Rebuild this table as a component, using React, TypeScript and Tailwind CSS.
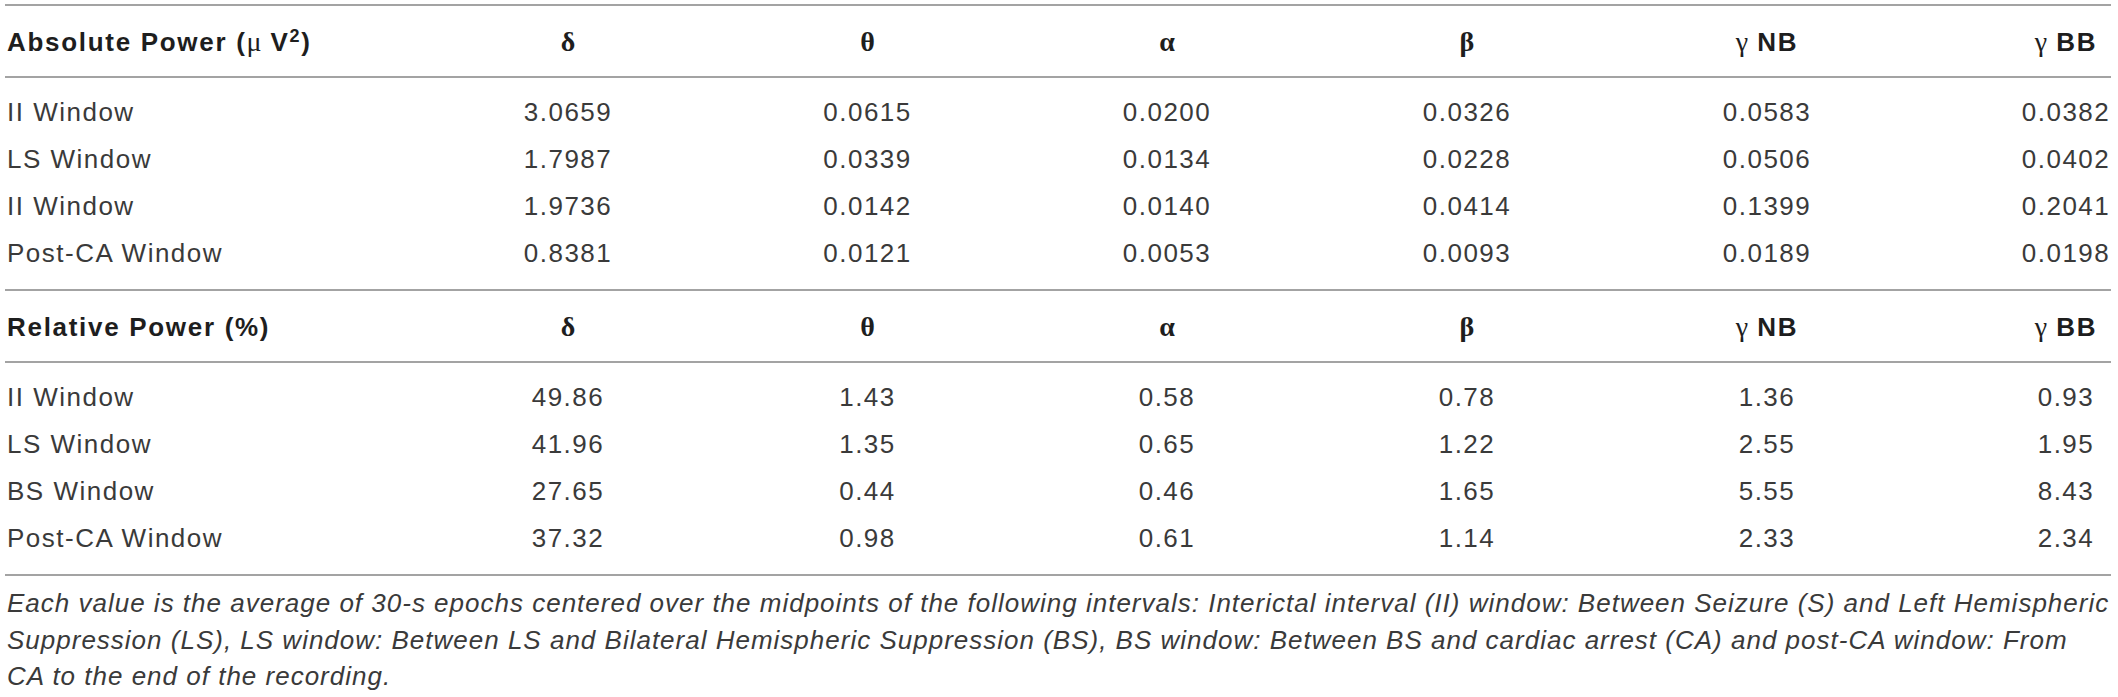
import type { ReactNode } from "react";

type Row = { label: string; values: string[] };

const absoluteRows: Row[] = [
  { label: "II Window", values: ["3.0659", "0.0615", "0.0200", "0.0326", "0.0583", "0.0382"] },
  { label: "LS Window", values: ["1.7987", "0.0339", "0.0134", "0.0228", "0.0506", "0.0402"] },
  { label: "II Window", values: ["1.9736", "0.0142", "0.0140", "0.0414", "0.1399", "0.2041"] },
  { label: "Post-CA Window", values: ["0.8381", "0.0121", "0.0053", "0.0093", "0.0189", "0.0198"] },
];

const relativeRows: Row[] = [
  { label: "II Window", values: ["49.86", "1.43", "0.58", "0.78", "1.36", "0.93"] },
  { label: "LS Window", values: ["41.96", "1.35", "0.65", "1.22", "2.55", "1.95"] },
  { label: "BS Window", values: ["27.65", "0.44", "0.46", "1.65", "5.55", "8.43"] },
  { label: "Post-CA Window", values: ["37.32", "0.98", "0.61", "1.14", "2.33", "2.34"] },
];

// grid shared by header and body rows
const grid = "grid grid-cols-[413px_300px_299px_300px_300px_300px_1fr] items-center";

const Greek = ({ children, light }: { children: ReactNode; light?: boolean }) => (
  <span
    className={`font-['Liberation_Serif',serif] text-[28px] tracking-normal ${
      light ? "font-normal" : "font-bold"
    }`}
  >
    {children}
  </span>
);

const bands: ReactNode[] = [
  <Greek>δ</Greek>,
  <Greek>θ</Greek>,
  <Greek>α</Greek>,
  <Greek>β</Greek>,
  <>
    <Greek light>γ</Greek> NB
  </>,
  <>
    <Greek light>γ</Greek> BB
  </>,
];

const Cell = ({ children, last }: { children: ReactNode; last?: boolean }) =>
  last ? (
    <div className="flex justify-end">
      <div className="w-[90px] text-center whitespace-nowrap">{children}</div>
    </div>
  ) : (
    <div className="text-center whitespace-nowrap">{children}</div>
  );

const Section = ({ title, rows, first }: { title: ReactNode; rows: Row[]; first?: boolean }) => (
  <div>
    <div
      className={`${grid} pt-[2px] border-b-2 border-[#a3a3a3] font-bold text-[#1e1e1e] tracking-[1.7px] ${
        first ? "h-[74px] border-t-2" : "h-[72px]"
      }`}
    >
      <div className="pl-[2px] whitespace-nowrap">{title}</div>
      {bands.map((b, i) => (
        <Cell key={i} last={i === bands.length - 1}>
          {b}
        </Cell>
      ))}
    </div>
    <div className="pt-[11px] pb-[12px] border-b-2 border-[#a3a3a3] text-[#3a3a3a] tracking-[1.5px]">
      {rows.map((r, i) => (
        <div key={i} className={`${grid} h-[47px]`}>
          <div className="pl-[2px] whitespace-nowrap">{r.label}</div>
          {r.values.map((v, j) => (
            <Cell key={j} last={j === r.values.length - 1}>
              {v}
            </Cell>
          ))}
        </div>
      ))}
    </div>
  </div>
);

export default function App() {
  return (
    <div className="w-[2118px] h-[697px] bg-white pt-[4px] font-['Liberation_Sans',Arial,sans-serif] text-[26px]">
      <div className="ml-[5px] w-[2106px]">
        <Section
          first
          title={
            <>
              Absolute Power (<Greek light>μ</Greek> V<sup className="text-[18px]">2</sup>)
            </>
          }
          rows={absoluteRows}
        />
        <Section title="Relative Power (%)" rows={relativeRows} />
        <div className="pt-[9px] pl-[2px] italic text-[#3a3a3a] leading-[36.5px] tracking-[1px]">
          <span className="block whitespace-nowrap">
            Each value is the average of 30-s epochs centered over the midpoints of the following intervals:
            Interictal interval (II) window: Between Seizure (S) and Left Hemispheric
          </span>
          <span className="block whitespace-nowrap">
            Suppression (LS), LS window: Between LS and Bilateral Hemispheric Suppression (BS), BS window: Between
            BS and cardiac arrest (CA) and post-CA window: From
          </span>
          <span className="block whitespace-nowrap">CA to the end of the recording.</span>
        </div>
      </div>
    </div>
  );
}
